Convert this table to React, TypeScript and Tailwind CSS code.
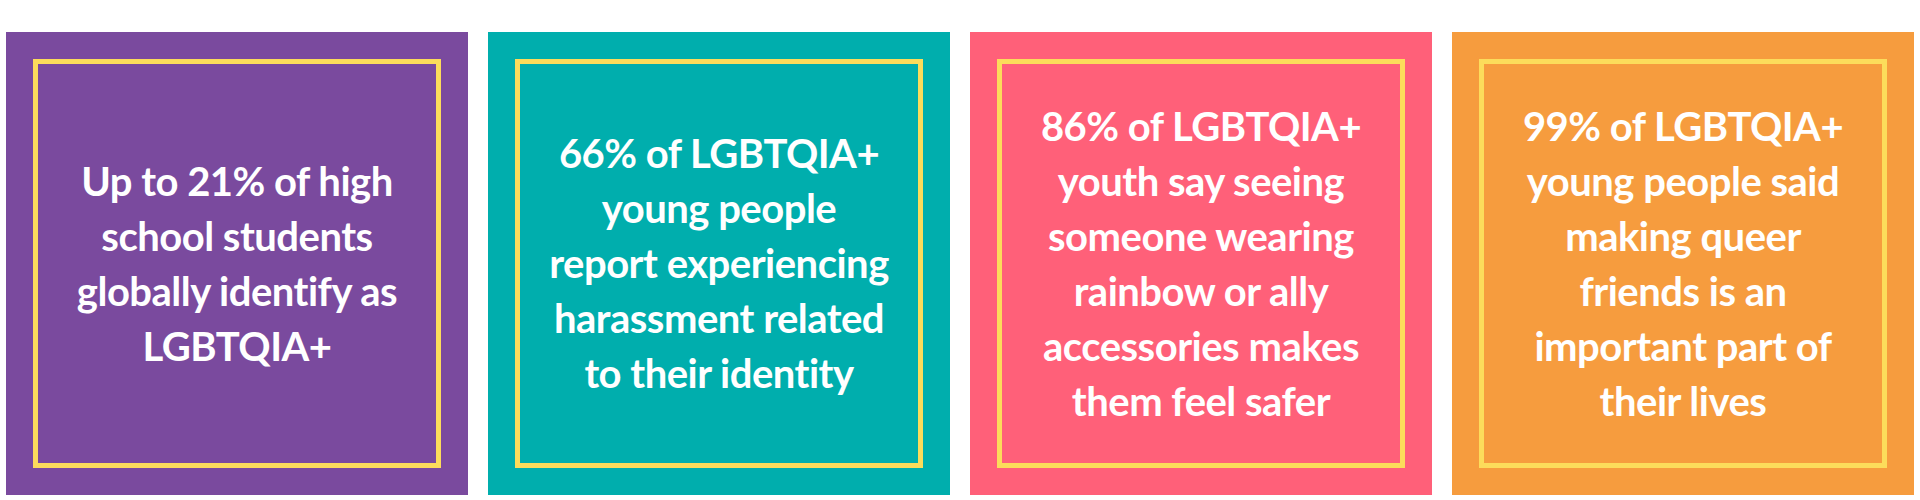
const stats = [
  {
    bg: "bg-[#7a4a9e]",
    lines: ["Up to 21% of high", "school students", "globally identify as", "LGBTQIA+"],
  },
  {
    bg: "bg-[#00aead]",
    lines: ["66% of LGBTQIA+", "young people", "report experiencing", "harassment related", "to their identity"],
  },
  {
    bg: "bg-[#ff6079]",
    lines: [
      "86% of LGBTQIA+",
      "youth say seeing",
      "someone wearing",
      "rainbow or ally",
      "accessories makes",
      "them feel safer",
    ],
  },
  {
    bg: "bg-[#f69c3e]",
    lines: [
      "99% of LGBTQIA+",
      "young people said",
      "making queer",
      "friends is an",
      "important part of",
      "their lives",
    ],
  },
];

export default function App() {
  return (
    <div className="w-[1920px] h-[500px] bg-white flex gap-5 pl-[6px] pt-[32px]">
      {stats.map((s, i) => (
        <div key={i} className={`w-[462px] h-[463px] flex items-center justify-center ${s.bg}`}>
          <div className="w-[408px] h-[409px] border-[5px] border-[#fcdc5b] flex items-center justify-center">
            <p className="text-center text-white font-bold text-[40px] leading-[55px] tracking-[-0.5px] font-['Lato','Liberation_Sans',sans-serif]">
              {s.lines.map((l, j) => (
                <span key={j} className="block whitespace-nowrap">
                  {l}
                </span>
              ))}
            </p>
          </div>
        </div>
      ))}
    </div>
  );
}
